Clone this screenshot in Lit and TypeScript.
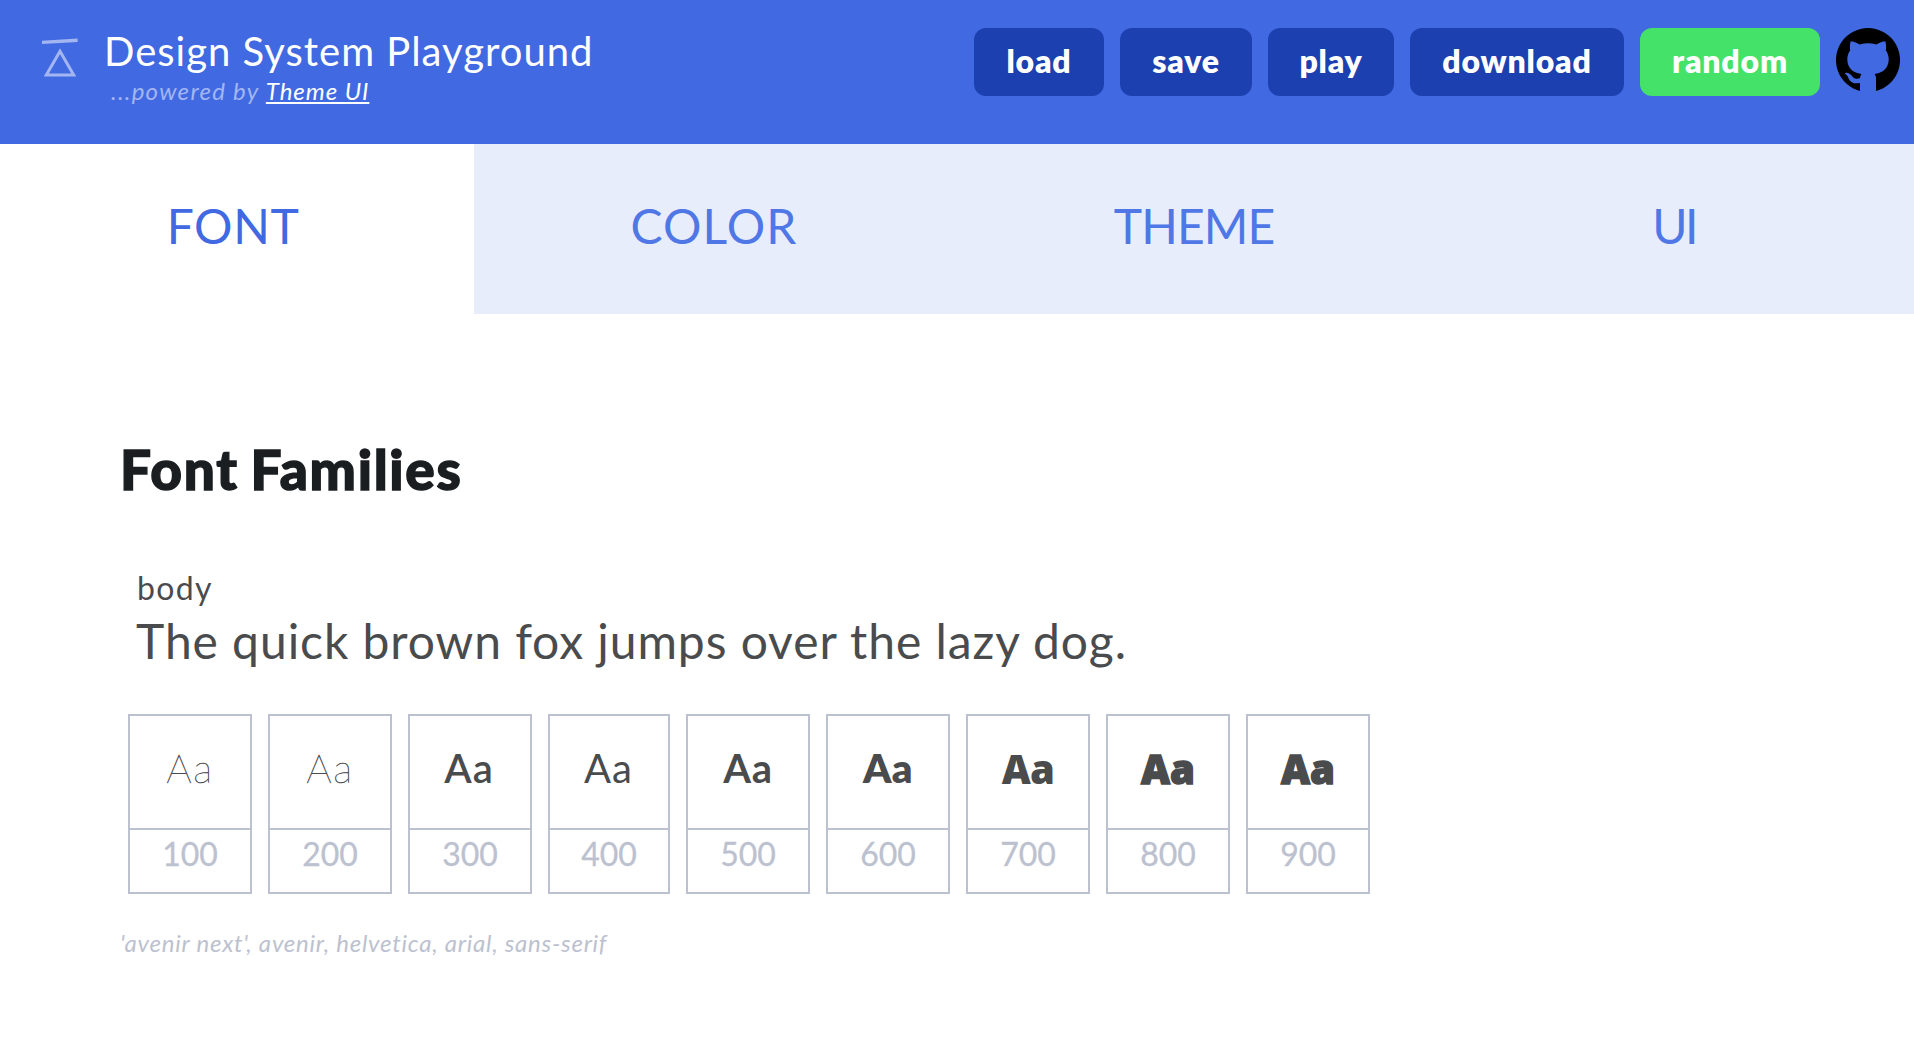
import { LitElement, html, css } from "lit";
import { customElement, property, state } from "lit/decorators.js";
import { classMap } from "lit/directives/class-map.js";

const TABS = ["font", "color", "theme", "ui"];
const ACTIONS = ["load", "save", "play", "download", "random"];
const WEIGHTS = [100, 200, 300, 400, 500, 600, 700, 800, 900];

@customElement("playground-header")
class PlaygroundHeader extends LitElement {
  static styles = css`
    :host {
      display: flex;
      align-items: flex-start;
      height: 144px;
      box-sizing: border-box;
      padding: 28px 14px 0 40px;
      background: #4169e1;
      color: #fff;
    }
    .logo {
      width: 40px;
      height: 40px;
      margin: 10px 24px 0 0;
      stroke: #a3b6f2;
      fill: none;
    }
    .brand {
      flex: 1;
      padding-top: 3px;
    }
    .title {
      margin: 0;
      font-size: 40px;
      font-weight: 400;
      line-height: 41px;
      letter-spacing: 1px;
    }
    .powered {
      margin: 7px 0 0;
      padding-left: 7px;
      font-size: 24px;
      line-height: 24px;
      font-style: italic;
      letter-spacing: 1.27px;
      color: #a3b6f2;
    }
    .link {
      color: #fff;
      letter-spacing: 0.95px;
      text-decoration: underline;
      text-decoration-thickness: 2px;
      text-underline-offset: 2px;
      text-decoration-skip-ink: none;
    }
    .actions {
      display: flex;
      gap: 16px;
    }
    .button {
      height: 68px;
      padding: 0 0 2px;
      border: 0;
      border-radius: 12px;
      background: #1c40b0;
      color: #fff;
      font: 800 32px/64px Lato, sans-serif;
      letter-spacing: 0.8px;
      text-align: center;
    }
    .load { width: 130px; }
    .save { width: 132px; }
    .play { width: 126px; }
    .download { width: 214px; }
    .random {
      width: 180px;
      background: #44e269;
    }
    .github {
      width: 64px;
      height: 64px;
      fill: #000;
    }
  `;

  render() {
    return html`
      <svg class="logo" viewBox="0 0 40 40">
        <path d="M2 4.400L37.600 2.300" stroke-width="3.400" />
        <path d="M20 13.200L33.700 37H6.300Z" stroke-width="3" />
      </svg>
      <div class="brand">
        <h1 class="title">Design System Playground</h1>
        <p class="powered">...powered by <a class="link">Theme UI</a></p>
      </div>
      <div class="actions">
        ${ACTIONS.map((name) => html`<button class="button ${name}">${name}</button>`)}
        <svg class="github" viewBox="0 0 64 64">
          <path
            d="M24 63A32 32 0 1 1 40 63V51C40 48.600 39.500 47 38.500 46C45 45 52.700 42 52.700 31C52.700 27.800 51.600 24.800 49.800 22.500C50.200 20 50.300 17 49.300 13.300C46.500 13.300 43.500 14.600 40.300 16.500C37.500 15.700 34.700 15.300 32 15.300S26.500 15.700 23.700 16.500C20.500 14.600 17.500 13.300 14.700 13.300C13.700 17 13.800 20 14.200 22.500C12.400 24.800 11.300 27.800 11.300 31C11.300 42 19 45 25.500 46C24.700 47 24.200 48.500 24 50C21 51.300 18.200 51 16.300 48.500C15 46.500 13 44.700 10 44.700C8.500 44.800 8.600 45.500 10 46.500C11.500 47.500 12.300 49.500 13 51.200C14.500 54.800 19 56 24 55Z"
          />
        </svg>
      </div>
    `;
  }
}

@customElement("playground-tabs")
class PlaygroundTabs extends LitElement {
  @state() private selected = "font";

  static styles = css`
    :host {
      display: grid;
      grid-template-columns: 474px repeat(3, 1fr);
      height: 170px;
    }
    .tab {
      padding: 0 0 6px;
      border: 0;
      background: #e8edfb;
      color: #5077e6;
      font: 400 48px/164px Lato, sans-serif;
      text-align: center;
      text-transform: uppercase;
    }
    .selected {
      background: #fff;
      color: #4169e1;
    }
    .font {
      padding-right: 8px;
      letter-spacing: 0.6px;
    }
    .color { letter-spacing: 1.1px; }
    .theme { letter-spacing: -0.9px; }
    .ui { letter-spacing: -2.5px; }
  `;

  render() {
    return TABS.map(
      (name) => html`<button
        class=${classMap({ tab: true, [name]: true, selected: name === this.selected })}
        @click=${() => (this.selected = name)}
      >${name}</button>`
    );
  }
}

@customElement("weight-card")
class WeightCard extends LitElement {
  @property({ type: Number }) weight = 400;

  static styles = css`
    :host { display: block; }
    .card {
      height: 180px;
      box-sizing: border-box;
      border: 2px solid #bcc1cf;
      text-align: center;
    }
    .sample {
      height: 112px;
      border-bottom: 2px solid #bcc1cf;
      font-size: 40px;
      line-height: 105px;
      color: #4a4b4d;
    }
    .number {
      font-size: 32px;
      line-height: 47px;
      color: #bcc1cf;
      -webkit-text-stroke: 0.3px #bcc1cf;
    }
    .w100, .w200 {
      font-weight: 100;
      letter-spacing: 1.5px;
      -webkit-text-stroke: 0.4px #4a4b4d;
    }
    .w300 { font-weight: 600; letter-spacing: 1px; text-indent: -2px; }
    .w400 { font-weight: 400; letter-spacing: 1px; text-indent: -1px; }
    .w500 { font-weight: 700; letter-spacing: 0.8px; }
    .w600 { font-weight: 800; letter-spacing: 0.5px; }
    .w700, .w800, .w900 {
      font-family: "Open Sans", sans-serif;
      font-weight: 800;
    }
    .w700 { letter-spacing: -0.8px; }
    .w800, .w900 { -webkit-text-stroke: 1.4px #4a4b4d; }
  `;

  render() {
    return html`<div class="card">
      <div class="sample w${this.weight}">Aa</div>
      <div class="number">${this.weight}</div>
    </div>`;
  }
}

@customElement("app-root")
class AppRoot extends LitElement {
  static styles = css`
    :host {
      display: block;
      min-height: 1038px;
      background: #fff;
      color: #4a4b4d;
      font-family: Lato, sans-serif;
    }
    .main { padding: 125px 120px 0; }
    .heading {
      margin: 0;
      font-size: 55px;
      font-weight: 900;
      line-height: 60px;
      letter-spacing: 1.7px;
      word-spacing: -3px;
      color: #1a1e21;
      -webkit-text-stroke: 1.4px #1a1e21;
    }
    .name {
      margin: 73px 0 0 17px;
      font-size: 32px;
      line-height: 32px;
      letter-spacing: 1.3px;
    }
    .quote {
      margin: 13px 0 0 16px;
      font-size: 48px;
      line-height: 48px;
      letter-spacing: 0.94px;
    }
    .weights {
      display: grid;
      grid-template-columns: repeat(3, 124px) 122px repeat(5, 124px);
      gap: 16px;
      margin: 49px 0 0 8px;
    }
    .stack {
      margin: 37px 0 0;
      font-size: 24px;
      line-height: 24px;
      font-style: italic;
      letter-spacing: 0.75px;
      color: #bcc1cf;
    }
  `;

  render() {
    return html`
      <playground-header></playground-header>
      <playground-tabs></playground-tabs>
      <main class="main">
        <h2 class="heading">Font Families</h2>
        <div class="name">body</div>
        <div class="quote">The quick brown fox jumps over the lazy dog.</div>
        <div class="weights">
          ${WEIGHTS.map((w) => html`<weight-card .weight=${w}></weight-card>`)}
        </div>
        <div class="stack">'avenir next', avenir, helvetica, arial, sans-serif</div>
      </main>
    `;
  }
}
